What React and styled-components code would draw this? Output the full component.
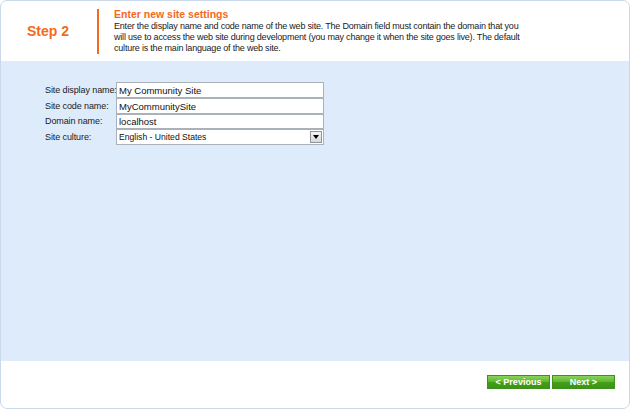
import React from "react";
import styled, { createGlobalStyle } from "styled-components";

const Global = createGlobalStyle`
  html, body { margin: 0; padding: 0; background: #fff; }
  body { font-family: "Liberation Sans", Arial, sans-serif; }
`;

const Frame = styled.div`
  width: 630px;
  height: 409px;
  box-sizing: border-box;
  border: 1px solid #c9d9ea;
  border-radius: 7px;
  overflow: hidden;
  display: flex;
  flex-direction: column;
  background: #fff;
`;

const Header = styled.header`
  height: 60px;
  display: flex;
  align-items: center;
  flex-shrink: 0;
`;

const StepLabel = styled.div`
  width: 96px;
  box-sizing: border-box;
  padding-left: 26px;
  font-size: 14px;
  font-weight: bold;
  color: #f26a1b;
  margin-top: -1px;
`;

const Divider = styled.div`
  width: 2px;
  height: 45px;
  background: #f26a1b;
  margin-top: 0px;
`;

const Intro = styled.div`
  padding-left: 15px;
  margin-top: -1px;
`;

const Title = styled.div`
  font-size: 10.5px;
  font-weight: bold;
  color: #f26a1b;
  line-height: 13px;
`;

const Desc = styled.div`
  font-size: 9px;
  color: #1a1a1a;
  line-height: 11px;
  letter-spacing: -0.2px;
`;

const Body = styled.main`
  flex: 1;
  background: #deebfb;
  padding: 21px 0 0 44px;
`;

const Form = styled.div`
  display: grid;
  grid-template-columns: 71px 208px;
  grid-template-rows: 16px 16px 15px 16px;
  align-items: center;
`;

const Label = styled.label`
  font-size: 9px;
  letter-spacing: -0.1px;
  color: #1a1a1a;
  line-height: 15px;
  white-space: nowrap;
`;

const Field = styled.div`
  height: ${(p) => (p.$short ? 15 : 16)}px;
  box-sizing: border-box;
  border: 1px solid #aab1b8;
  background: #fff;
  font-size: ${(p) => (p.$small ? 8.6 : 9.5)}px;
  line-height: 13px;
  padding-left: 2px;
  color: #111;
  display: flex;
  align-items: center;
`;

const SelectText = styled.span`
  flex: 1;
`;

const DropButton = styled.div`
  width: 12px;
  height: 12px;
  box-sizing: border-box;
  border: 1px solid #8e959c;
  background: linear-gradient(#f4f4f4, #d8d8d8);
  margin-right: 1px;
  display: flex;
  align-items: center;
  justify-content: center;
`;

const Footer = styled.footer`
  height: 47px;
  flex-shrink: 0;
  display: flex;
  justify-content: flex-end;
  align-items: flex-start;
  gap: 2px;
  padding: 14px 14px 0 0;
  box-sizing: border-box;
`;

const NavButton = styled.button`
  width: ${(p) => p.$w}px;
  height: 14px;
  padding: 0;
  border: 1px solid #3f8f1f;
  background: linear-gradient(#8ad35c 0%, #5cb52e 50%, #43a018 51%, #3c9314 100%);
  color: #fff;
  font-family: "Liberation Sans", Arial, sans-serif;
  font-size: 9px;
  font-weight: bold;
  line-height: 12px;
  text-align: center;
  cursor: pointer;
`;

export default function App() {
  return (
    <>
      <Global />
      <Frame>
        <Header>
          <StepLabel>Step 2</StepLabel>
          <Divider />
          <Intro>
            <Title>Enter new site settings</Title>
            <Desc>
              Enter the display name and code name of the web site. The Domain field must contain the domain that you
              <br />
              will use to access the web site during development (you may change it when the site goes live). The default
              <br />
              culture is the main language of the web site.
            </Desc>
          </Intro>
        </Header>
        <Body>
          <Form>
            <Label>Site display name:</Label>
            <Field>My Community Site</Field>
            <Label>Site code name:</Label>
            <Field>MyCommunitySite</Field>
            <Label>Domain name:</Label>
            <Field $short>localhost</Field>
            <Label>Site culture:</Label>
            <Field $small>
              <SelectText>English - United States</SelectText>
              <DropButton>
                <svg width="6" height="4" viewBox="0 0 6 4">
                  <path d="M0 0 H6 L3 4 Z" fill="#000" />
                </svg>
              </DropButton>
            </Field>
          </Form>
        </Body>
        <Footer>
          <NavButton $w={63}>&lt; Previous</NavButton>
          <NavButton $w={63}>Next &gt;</NavButton>
        </Footer>
      </Frame>
    </>
  );
}
